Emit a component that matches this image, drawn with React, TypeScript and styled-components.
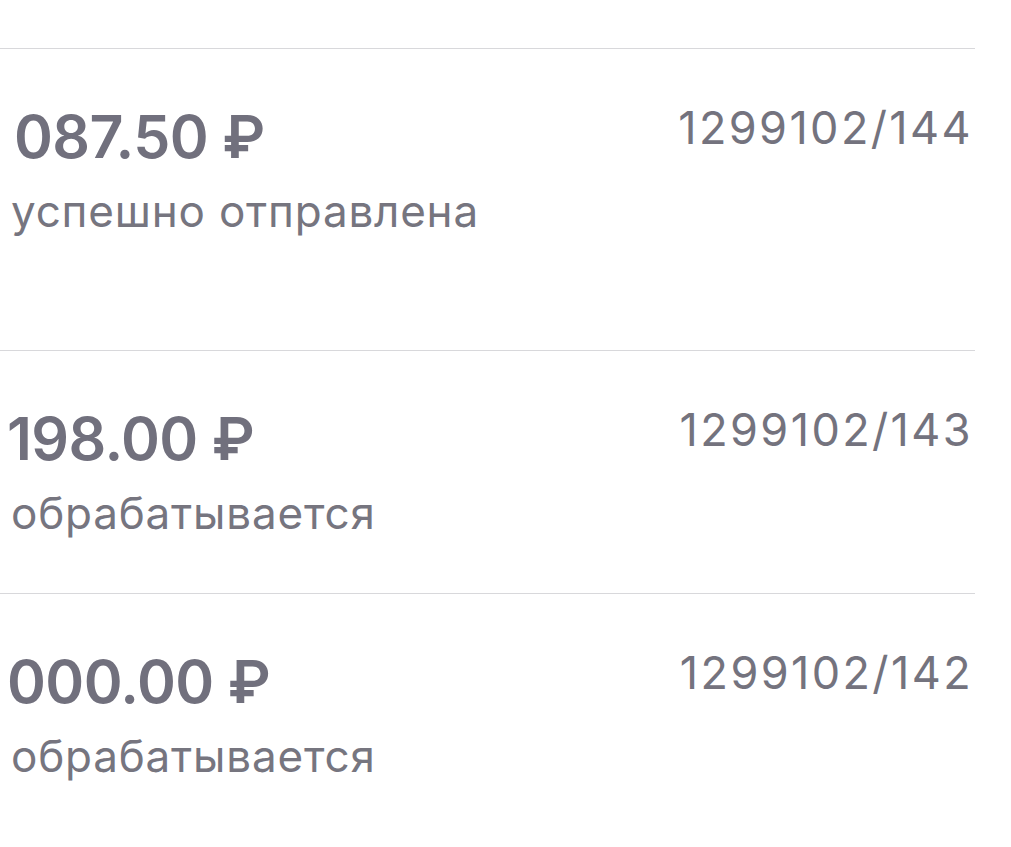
import React from "react";
import styled, { createGlobalStyle } from "styled-components";

type Payment = {
  amount: string;
  status: string;
  number: string;
  shift: number;
  height: number;
};

const payments: Payment[] = [
  { amount: "087.50 ₽", status: "успешно отправлена", number: "1299102/144", shift: 14, height: 302 },
  { amount: "198.00 ₽", status: "обрабатывается", number: "1299102/143", shift: 7, height: 243 },
  { amount: "000.00 ₽", status: "обрабатывается", number: "1299102/142", shift: 7, height: 254 },
];

const App = () => {
  return (
    <>
      <GlobalStyle />
      <Screen>
        <List>
          {payments.map((p) => (
            <Row key={p.number} $height={p.height}>
              <Info>
                <Amount $shift={p.shift}>{p.amount}</Amount>
                <Status>{p.status}</Status>
              </Info>
              <Number>{p.number}</Number>
            </Row>
          ))}
        </List>
      </Screen>
    </>
  );
};

export default App;

const GlobalStyle = createGlobalStyle`
  body {
    margin: 0;
    background: #fff;
    font-family: Inter, "Noto Sans", sans-serif;
  }
`;

const Screen = styled.div`
  width: 1011px;
  height: 847px;
  overflow: hidden;
  padding-top: 48px;
  box-sizing: border-box;
`;

const List = styled.div`
  width: 975px;
`;

const Row = styled.div<{ $height: number }>`
  display: flex;
  justify-content: space-between;
  align-items: flex-start;
  height: ${(p) => p.$height}px;
  box-sizing: border-box;
  border-top: 1px solid #d8d8db;
  padding-top: 52px;
`;

const Info = styled.div`
  display: flex;
  flex-direction: column;
`;

const Amount = styled.div<{ $shift: number }>`
  margin-left: ${(p) => p.$shift}px;
  font-size: 59px;
  font-weight: 600;
  line-height: 72px;
  letter-spacing: -0.6px;
  color: #71707d;
`;

const Status = styled.div`
  margin-left: 11px;
  margin-top: 11px;
  font-size: 44px;
  line-height: 54px;
  letter-spacing: 0.8px;
  color: #76757f;
`;

const Number = styled.div`
  font-size: 45px;
  line-height: 54px;
  letter-spacing: 2.4px;
  color: #74737e;
  margin-right: 2px;
`;
